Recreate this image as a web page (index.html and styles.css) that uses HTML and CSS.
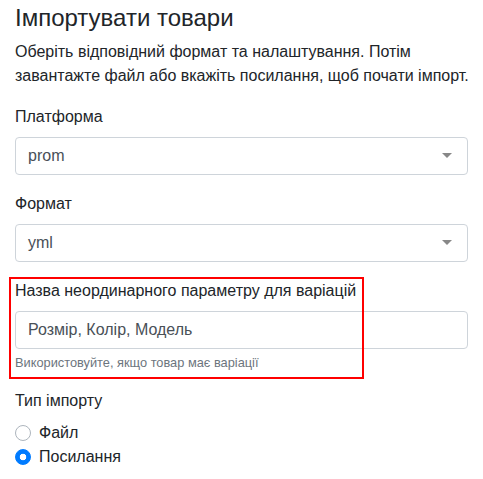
FILE: index.html
```html
<!DOCTYPE html>
<html lang="uk">
<head>
<meta charset="utf-8">
<link rel="stylesheet" href="styles.css">
</head>
<body>
<div class="page">
  <h4 class="title">Імпортувати товари</h4>
  <p class="intro">Оберіть відповідний формат та налаштування. Потім завантажте файл або вкажіть посилання, щоб почати імпорт.</p>

  <div class="group">
    <label class="label">Платформа</label>
    <div class="select"><span class="select-value">prom</span><span class="caret"></span></div>
  </div>

  <div class="group">
    <label class="label">Формат</label>
    <div class="select"><span class="select-value">yml</span><span class="caret"></span></div>
  </div>

  <div class="group highlighted">
    <label class="label">Назва неординарного параметру для варіацій</label>
    <div class="input">Розмір, Колір, Модель</div>
    <small class="help">Використовуйте, якщо товар має варіації</small>
    <div class="highlight"></div>
  </div>

  <div class="group">
    <label class="label">Тип імпорту</label>
    <div class="radio"><span class="radio-dot"></span><span>Файл</span></div>
    <div class="radio"><span class="radio-dot checked"></span><span>Посилання</span></div>
  </div>
</div>
</body>
</html>
```

FILE: styles.css
```css
* { box-sizing: border-box; }
html, body { margin: 0; padding: 0; background: #fff; }
body {
  font-family: "Liberation Sans", Arial, sans-serif;
  font-size: 16px;
  line-height: 1.5;
  color: #212529;
}
.page { padding: 4px 15px 0 15px; }
.title {
  margin: 0 0 7px 0;
  font-size: 24px;
  font-weight: 400;
  line-height: 1.2;
}
.intro {
  margin: 0 -8px 17px 0;
  font-size: 16px;
  line-height: 24px;
}
.group { margin-bottom: 17px; }
.label { display: block; margin-bottom: 8px; line-height: 24px; }
.select, .input {
  height: 38px;
  border: 1px solid #ced4da;
  border-radius: 4px;
  padding: 0 12px;
  display: flex;
  align-items: center;
  color: #495057;
}
.select { justify-content: space-between; }
.caret {
  width: 0; height: 0;
  border-style: solid;
  border-width: 5px 5px 0 5px;
  border-color: #888 transparent transparent transparent;
  margin-right: 3px;
}
.help {
  display: block;
  margin-top: 4px;
  font-size: 12.8px;
  line-height: 19.2px;
  color: #6c757d;
}
.highlighted { position: relative; }
.highlight {
  position: absolute;
  top: -2px;
  left: -6px;
  width: 355px;
  height: 102px;
  border: 2px solid #ff0000;
  pointer-events: none;
}
.radio {
  display: flex;
  align-items: center;
  gap: 8px;
  height: 24px;
}
.radio-dot {
  width: 16px; height: 16px;
  border-radius: 50%;
  border: 1px solid #adb5bd;
  background: #fff;
  flex: none;
}
.radio-dot.checked {
  border-color: #007bff;
  background: radial-gradient(circle, #fff 0 3px, #007bff 3.6px);
}
```
